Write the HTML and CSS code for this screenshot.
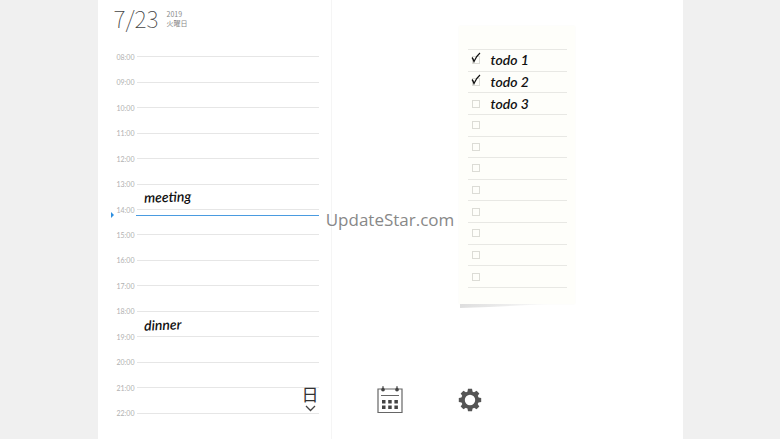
FILE: index.html
```
<!DOCTYPE html>
<html lang="ja">
<head>
    <meta charset="UTF-8">
    <meta name="viewport" content="width=device-width, initial-scale=1.0">
    <title>7/23</title>
    <link rel="stylesheet" href="styles.css">
</head>
<body>
    <main class="planner">
        <section class="day">
            <header class="date">
                <h1>7/23</h1>
                <p>2019<br>火曜日</p>
            </header>
            <ol class="hours">
                <li><time>08:00</time></li>
                <li><time>09:00</time></li>
                <li><time>10:00</time></li>
                <li><time>11:00</time></li>
                <li><time>12:00</time></li>
                <li><time>13:00</time><span class="ink event">meeting</span></li>
                <li><time>14:00</time><span class="now"></span></li>
                <li><time>15:00</time></li>
                <li><time>16:00</time></li>
                <li><time>17:00</time></li>
                <li><time>18:00</time><span class="ink event">dinner</span></li>
                <li><time>19:00</time></li>
                <li><time>20:00</time></li>
                <li><time>21:00</time></li>
                <li><time>22:00</time></li>
            </ol>
            <button class="view-btn" type="button">
                日
                <svg width="11" height="7" viewBox="0 0 11 7"><path d="M1 1l4.500 4.500L10 1" fill="none" stroke="#444" stroke-width="1.300"/></svg>
            </button>
        </section>

        <section class="board">
            <div class="note">
                <ul class="todos">
                    <li><input type="checkbox" id="t1" checked><svg class="tick" width="10" height="12" viewBox="0 0 10 12"><path d="M1 5.500C2 6.500 2.500 8 3 9.500C4.500 6 6.500 3 9 1" fill="none" stroke="#111" stroke-width="1.300"/></svg><label class="ink" for="t1">todo 1</label></li>
                    <li><input type="checkbox" id="t2" checked><svg class="tick" width="10" height="12" viewBox="0 0 10 12"><path d="M1 5.500C2 6.500 2.500 8 3 9.500C4.500 6 6.500 3 9 1" fill="none" stroke="#111" stroke-width="1.300"/></svg><label class="ink" for="t2">todo 2</label></li>
                    <li><input type="checkbox" id="t3"><label class="ink" for="t3">todo 3</label></li>
                    <li><input type="checkbox" aria-label="4"></li>
                    <li><input type="checkbox" aria-label="5"></li>
                    <li><input type="checkbox" aria-label="6"></li>
                    <li><input type="checkbox" aria-label="7"></li>
                    <li><input type="checkbox" aria-label="8"></li>
                    <li><input type="checkbox" aria-label="9"></li>
                    <li><input type="checkbox" aria-label="10"></li>
                    <li><input type="checkbox" aria-label="11"></li>
                </ul>
                <svg class="curl" width="90" height="6" viewBox="0 0 90 6">
                    <defs>
                        <linearGradient id="fade">
                            <stop offset="0" stop-color="#dedede"/>
                            <stop offset="1" stop-color="#fafafa"/>
                        </linearGradient>
                    </defs>
                    <path d="M1 0H90L30 3L1 4Z" fill="url(#fade)"/>
                </svg>
            </div>
            <nav class="tools">
                <button type="button" aria-label="カレンダー">
                    <svg width="26" height="29" viewBox="0 0 26 29">
                        <path d="M4 4H1V27.500H25V4H22M8 4H18" fill="none" stroke="#666" stroke-width="1.200"/>
                        <path d="M6 1V4M20 1V4M4 10.500H22" stroke="#666" stroke-width="1.200"/>
                        <circle cx="6" cy="4.500" r="1.900" fill="#444"/>
                        <circle cx="20" cy="4.500" r="1.900" fill="#444"/>
                        <path d="M5 15h3.500v3.500h-3.500zM11.200 15h3.500v3.500h-3.500zM17.400 15h3.500v3.500h-3.500zM5 20.500h3.500v3.500h-3.500zM11.200 20.500h3.500v3.500h-3.500zM17.400 20.500h3.500v3.500h-3.500z" fill="#444"/>
                    </svg>
                </button>
                <button type="button" aria-label="設定">
                    <svg width="24" height="24" viewBox="-12 -12 24 24">
                        <g fill="#555">
                            <path id="tooth" d="M-2.800 -7L-2 -11.200H2L2.800 -7Z"/>
                            <use href="#tooth" transform="rotate(45)"/>
                            <use href="#tooth" transform="rotate(90)"/>
                            <use href="#tooth" transform="rotate(135)"/>
                            <use href="#tooth" transform="rotate(180)"/>
                            <use href="#tooth" transform="rotate(225)"/>
                            <use href="#tooth" transform="rotate(270)"/>
                            <use href="#tooth" transform="rotate(315)"/>
                        </g>
                        <circle r="7" fill="none" stroke="#555" stroke-width="3.600"/>
                    </svg>
                </button>
            </nav>
        </section>
    </main>
    <div class="watermark">UpdateStar.com</div>
</body>
</html>
```
FILE: styles.css
```
* {
    box-sizing: border-box;
}
body {
    margin: 0;
    background-color: #f0f0f0;
    font-family: Lato, "Noto Sans CJK JP", sans-serif;
    overflow: hidden;
}
h1, p, ol, ul {
    margin: 0;
    padding: 0;
    font-weight: normal;
}
ol, ul {
    list-style: none;
}
button {
    padding: 0;
    border: none;
    background: none;
    cursor: pointer;
}
svg {
    display: block;
}
.planner {
    display: flex;
    width: 75%;
    min-height: 100vh;
    margin: 0 auto;
    background-color: #fff;
}

/* day schedule */
.day {
    position: relative;
    flex: 0 0 40%;
    padding: 8px 12px 12px 16px;
    border-right: 1px solid #f5f5f5;
}
.date {
    display: flex;
    gap: 8px;
    height: 36px;
}
.date h1 {
    font-family: "Noto Sans CJK JP", sans-serif;
    font-weight: 100;
    font-size: 23px;
    line-height: 20px;
    color: #444;
}
.date p {
    padding-top: 2px;
    font-family: "Noto Sans CJK JP", sans-serif;
    font-size: 7px;
    line-height: 9px;
    color: #888;
}
.hours {
    display: grid;
    grid-auto-rows: 1fr;
    height: 382px;
}
.hours li {
    position: relative;
    display: flex;
    align-items: center;
    gap: 3px;
    padding-left: 3px;
    font-size: 7px;
    line-height: 8px;
    color: #b0b0b0;
}
.hours time {
    width: 17px;
}
.hours li::after {
    content: "";
    flex: 1;
    height: 1px;
    background-color: #e6e6e6;
}
.ink {
    font-family: Lato, sans-serif;
    font-style: italic;
    font-weight: 600;
    font-size: 14px;
    line-height: 16px;
    color: #111;
}
.event {
    position: absolute;
    top: 18px;
    left: 30px;
    transform: rotate(-2deg);
}
.now {
    position: absolute;
    top: 18px;
    left: 22px;
    right: 0;
    height: 1px;
    background-color: #4a9be0;
}
.now::before {
    content: "";
    position: absolute;
    top: -3px;
    left: -25px;
    border: 3px solid transparent;
    border-left: 3px solid #2f8fe0;
    border-right: none;
}
.view-btn {
    position: absolute;
    right: 12px;
    bottom: 27px;
    display: flex;
    flex-direction: column;
    align-items: center;
    font-family: "Noto Sans CJK JP", sans-serif;
    font-size: 17px;
    line-height: 18px;
    color: #333;
    gap: 2px;
}

/* todo note */
.board {
    flex: 1;
}
.note {
    position: relative;
    width: 116px;
    margin: 26px 0 0 127px;
    padding: 23px 8px 16px 9px;
    background-color: #fefefa;
    box-shadow: 0 0 2px #f8f8f4;
}
.todos {
    display: grid;
    grid-auto-rows: 1fr;
    height: 239px;
    border-top: 1px solid #e8e8e4;
}
.todos li {
    position: relative;
    display: flex;
    align-items: center;
    gap: 11px;
    padding-left: 4px;
    border-bottom: 1px solid #e8e8e4;
}
.todos input {
    appearance: none;
    width: 8px;
    height: 8px;
    margin: 0;
    border: 1px solid #dcdcd6;
}
.todos .tick {
    position: absolute;
    left: 3px;
    top: 2px;
}
.curl {
    position: absolute;
    top: 100%;
    left: 0;
}

.tools {
    display: flex;
    align-items: center;
    gap: 55px;
    margin: 81px 0 0 45px;
}

.watermark {
    position: absolute;
    top: 50%;
    left: 50%;
    transform: translate(-50%, -50%);
    font-family: "Open Sans", sans-serif;
    font-size: 17px;
    line-height: 24px;
    color: #888;
}
```
